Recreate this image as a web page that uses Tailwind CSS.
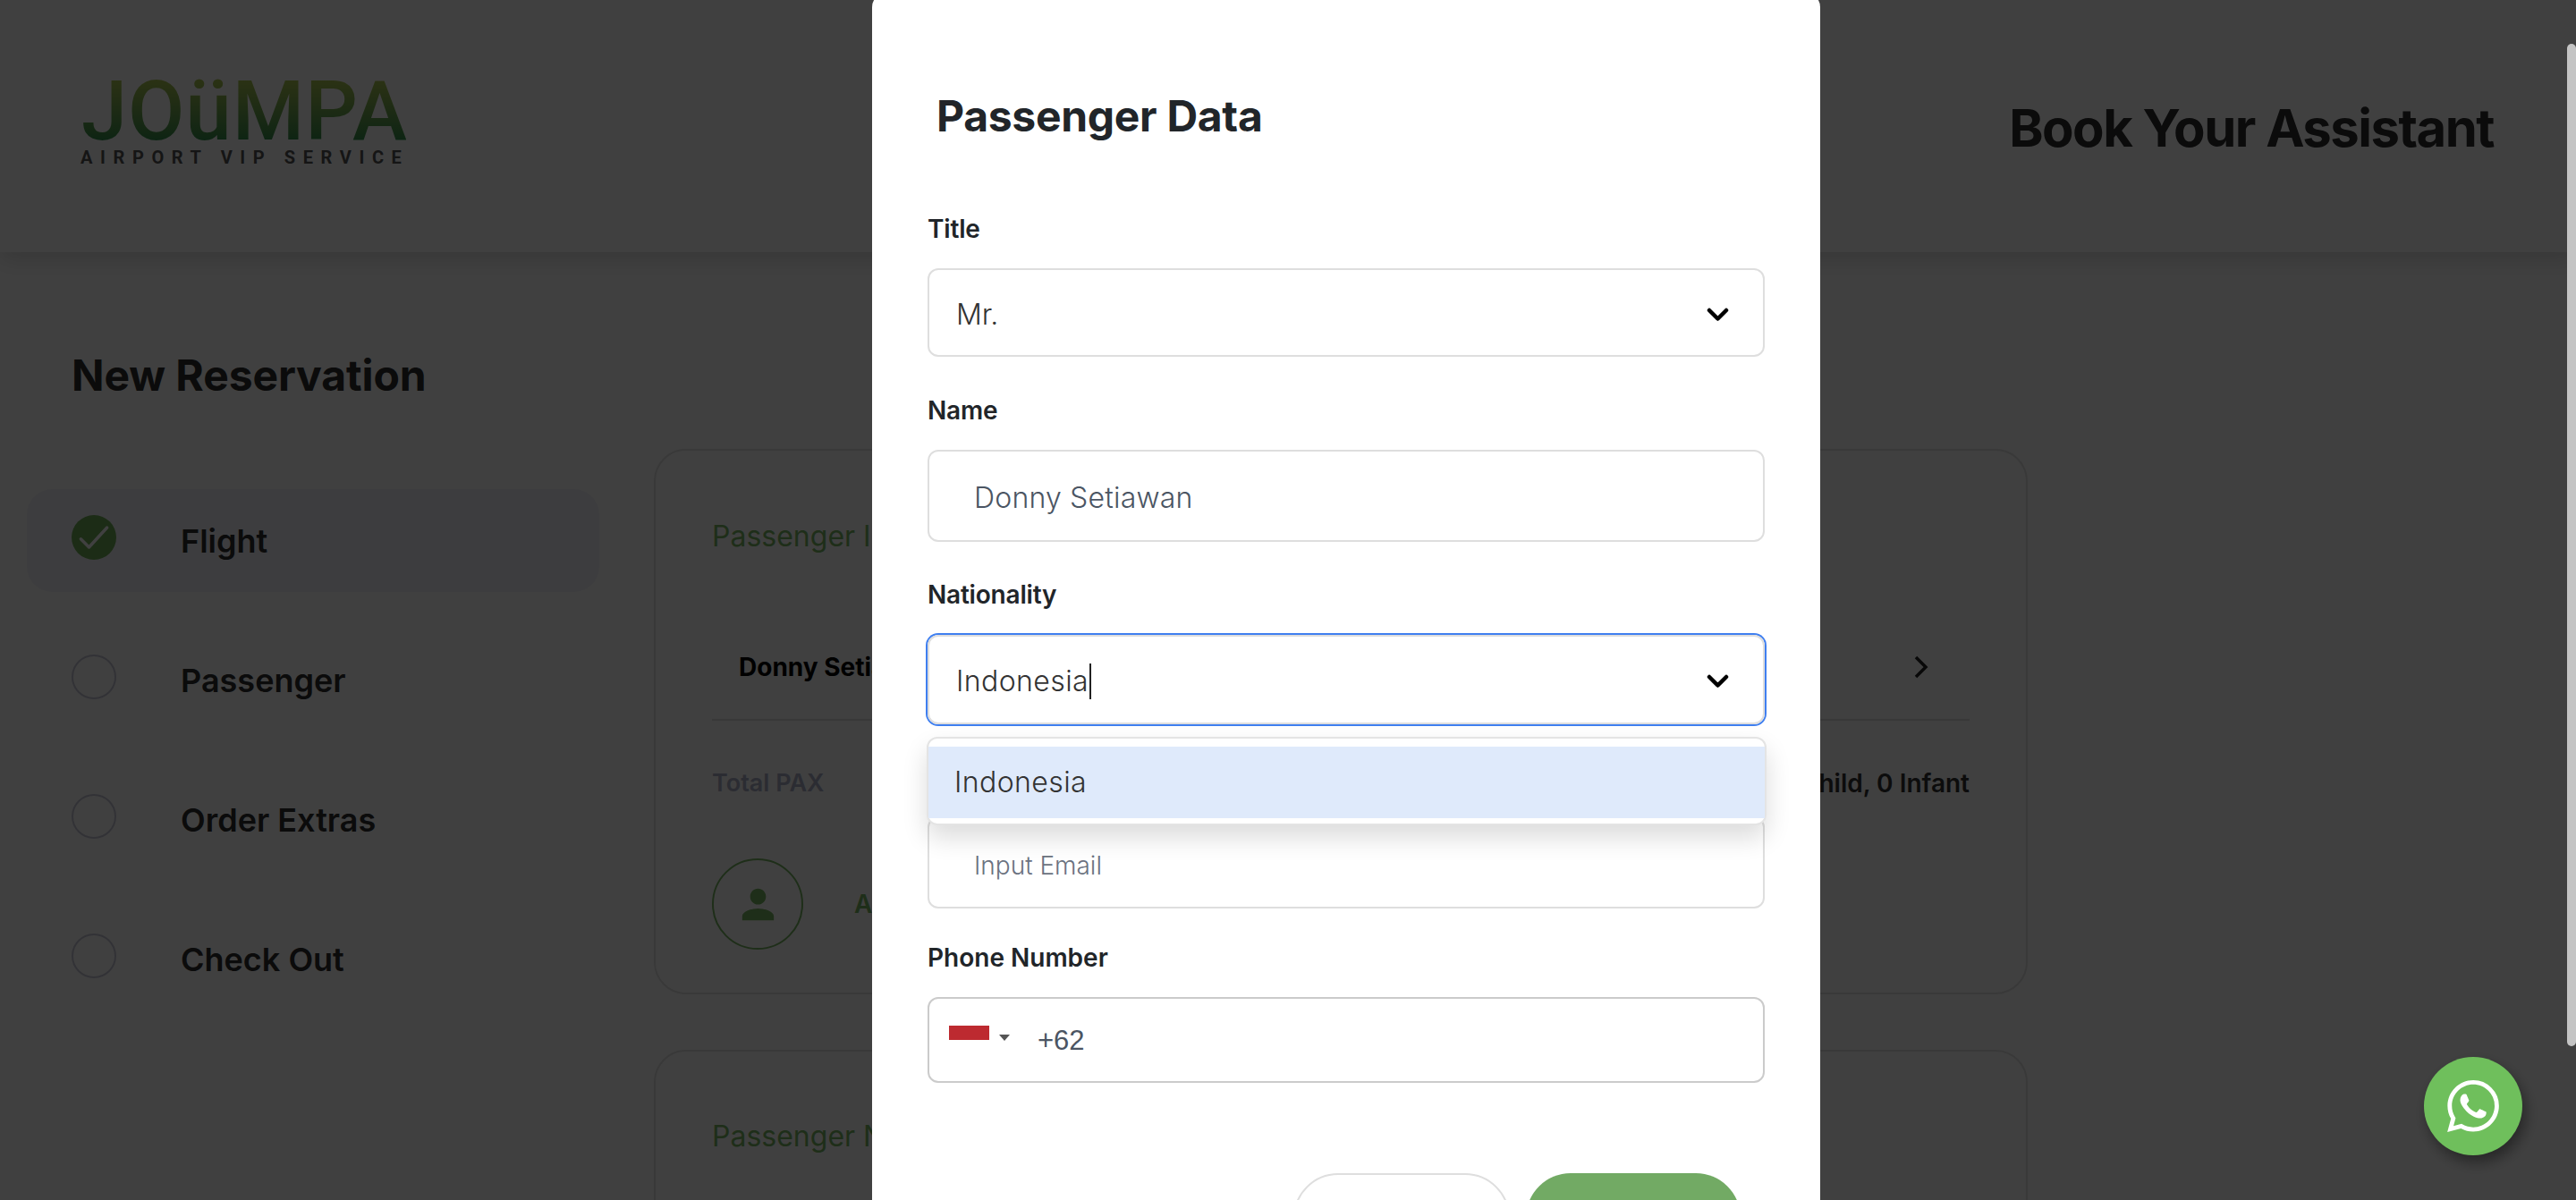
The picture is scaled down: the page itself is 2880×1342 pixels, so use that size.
<!DOCTYPE html>
<html lang="en">
<head>
  <meta charset="UTF-8" />
  <meta name="viewport" content="width=device-width, initial-scale=1.0"/>
  <title>New Reservation</title>
  <script src="https://cdn.jsdelivr.net/npm/@tailwindcss/browser@4"></script>
</head>
<body class="h-[1342px] overflow-hidden bg-white font-['Inter',sans-serif] text-[#2c2c2e]">

  <!-- Page behind the modal -->
  <header class="h-[282px] flex justify-between pl-[90px] pr-[92px] shadow-[0_8px_24px_rgba(0,0,0,0.15)]">
    <div class="w-[364px] mt-[86px]">
      <div class="pl-[1px] h-[78px] font-['Roboto',sans-serif] font-medium text-[92px] leading-[78px] tracking-[1px] bg-linear-to-b from-[#b0c850] to-[#1f8a4c] bg-clip-text text-transparent">JOüMPA</div>
      <div class="mt-[2px] font-['Roboto',sans-serif] font-bold text-[20px] leading-[20px] tracking-[8.6px] whitespace-nowrap text-[#555]">AIRPORT VIP SERVICE</div>
    </div>
    <div class="mt-[108px] text-[58px] leading-[70px] font-bold tracking-[-1.5px]">Book Your Assistant</div>
  </header>

  <main class="px-[30px]">
    <h1 class="mt-[108px] ml-[50px] text-[48px] leading-[60px] font-bold tracking-[-0.1px]">New Reservation</h1>

    <div class="mt-[52px] flex gap-[61px]">
      <nav class="w-[640px] pt-[45px] flex flex-col gap-[41px] text-[36px] font-semibold">
        <div class="h-[115px] pl-[50px] pr-[20px] flex items-center gap-[72px] rounded-[28px] bg-[#f4f4fa]">
          <span class="w-[50px] h-[50px] -mt-[7px] rounded-full bg-[#6fae58] flex items-center justify-center">
            <svg class="w-[44px] h-[44px]" viewBox="0 0 24 24" fill="none" stroke="#fff" stroke-width="1.9" stroke-linecap="round" stroke-linejoin="round"><path d="M4 13l5 5L20 6"/></svg>
          </span>
          <span>Flight</span>
        </div>
        <div class="h-[115px] pl-[50px] flex items-center gap-[72px]">
          <span class="w-[50px] h-[50px] -mt-[7px] rounded-full border-2 border-[#c8c8d8]"></span>
          <span>Passenger</span>
        </div>
        <div class="h-[115px] pl-[50px] flex items-center gap-[72px]">
          <span class="w-[50px] h-[50px] -mt-[7px] rounded-full border-2 border-[#c8c8d8]"></span>
          <span>Order Extras</span>
        </div>
        <div class="h-[115px] pl-[50px] flex items-center gap-[72px]">
          <span class="w-[50px] h-[50px] -mt-[7px] rounded-full border-2 border-[#c8c8d8]"></span>
          <span>Check Out</span>
        </div>
      </nav>

      <section class="w-[1536px] flex flex-col gap-[62px]">
        <div class="h-[610px] rounded-[36px] border-2 border-[#e2e2e2] px-[63px] pt-[76px]">
          <h2 class="text-[32px] leading-[40px] text-[#7ab865]">Passenger Information</h2>
          <div class="mt-[108px] pl-[30px] pr-[46px] h-[36px] flex items-center justify-between">
            <span class="text-[28px] font-bold text-black">Donny Setiawan</span>
            <svg class="w-[16px] h-[28px]" viewBox="0 0 16 28" fill="none" stroke="#222" stroke-width="3.5"><path d="M2 3l11 11L2 25"/></svg>
          </div>
          <div class="mt-[40px] h-[2px] bg-[#e0e0e0]"></div>
          <div class="mt-[52px] flex justify-between text-[28px] leading-[36px] font-semibold">
            <span class="text-[27px] text-[#acb0c8]">Total PAX</span>
            <span class="text-[#333]">1 Adult, 0 Child, 0 Infant</span>
          </div>
          <div class="mt-[66px] flex items-center gap-[57px]">
            <span class="w-[102px] h-[102px] rounded-full border-2 border-[#7ab865] flex items-center justify-center">
              <svg class="w-[53px] h-[53px] text-[#7ab865]" viewBox="0 0 24 24" fill="currentColor"><path d="M12 12c2.21 0 4-1.79 4-4s-1.79-4-4-4-4 1.79-4 4 1.79 4 4 4zm0 2c-2.67 0-8 1.34-8 4v2h16v-2c0-2.66-5.33-4-8-4z"/></svg>
            </span>
            <span class="text-[28px] font-semibold text-[#7ab865]">Add Passenger</span>
          </div>
        </div>
        <div class="h-[400px] rounded-[36px] border-2 border-[#e2e2e2] px-[63px] pt-[75px]">
          <h2 class="text-[32px] leading-[40px] text-[#7ab865]">Passenger Name</h2>
        </div>
      </section>
    </div>
  </main>

  <!-- Dim overlay and modal -->
  <div class="fixed inset-0 bg-black/75 overflow-hidden">
    <div class="w-[1060px] h-[1500px] -mt-[8px] ml-[975px] rounded-[16px] bg-white px-[62px] pt-[108px]">
      <h2 class="ml-[10px] text-[48px] leading-[60px] font-bold tracking-[-0.3px] text-[#212529]">Passenger Data</h2>

      <label class="block mt-[78px] text-[28px] leading-[36px] font-semibold tracking-[-0.2px] text-[#212529]">Title</label>
      <div class="mt-[26px] h-[99px] rounded-[12px] border-2 border-[#dedede] pt-[4px] pl-[30px] pr-[38px] flex items-center justify-between text-[32px] font-light text-[#333]">
        <span>Mr.</span>
        <svg class="w-[25px] h-[16px]" viewBox="0 0 25 16" fill="none" stroke="#000" stroke-width="4.5" stroke-linecap="round" stroke-linejoin="round"><path d="M3 3l9.5 9.5L22 3"/></svg>
      </div>

      <label class="block mt-[42px] text-[28px] leading-[36px] font-semibold tracking-[-0.2px] text-[#212529]">Name</label>
      <div class="mt-[26px] h-[103px] rounded-[12px] border-2 border-[#dedede] pt-[4px] pl-[50px] flex items-center text-[32px] font-light tracking-[0.2px] text-[#4b5563]">Donny Setiawan</div>

      <div class="relative">
        <label class="block mt-[41px] text-[28px] leading-[36px] font-semibold tracking-[-0.2px] text-[#212529]">Nationality</label>
        <div class="mt-[27px] h-[100px] rounded-[12px] border-2 border-[#dedede] ring-2 ring-[#3f7ff0] pt-[4px] pl-[30px] pr-[38px] flex items-center justify-between text-[32px] font-light text-[#333]">
          <span class="flex items-center tracking-[0.4px]">Indonesia<span class="ml-[1px] w-[2px] h-[40px] bg-[#222]"></span></span>
          <svg class="w-[25px] h-[16px]" viewBox="0 0 25 16" fill="none" stroke="#000" stroke-width="4.5" stroke-linecap="round" stroke-linejoin="round"><path d="M3 3l9.5 9.5L22 3"/></svg>
        </div>
        <!-- Open dropdown list -->
        <div class="absolute z-10 -left-[1px] -right-[2px] top-full mt-[14px] h-[99px] py-[9px] rounded-[12px] bg-white border-2 border-[#e4e4e4] shadow-[0_14px_28px_rgba(0,0,0,0.14)]">
          <div class="h-[80px] bg-[#dfeafb] pl-[29px] flex items-center text-[32px] font-light tracking-[0.4px] text-[#333]">Indonesia</div>
        </div>
      </div>

      <label class="block mt-[41px] text-[28px] leading-[36px] font-semibold tracking-[-0.2px] text-[#212529]">Email</label>
      <div class="mt-[26px] h-[103px] rounded-[12px] border-2 border-[#dedede] pt-[6px] pl-[50px] flex items-center text-[28px] font-light text-[#6b7280]">Input Email</div>

      <label class="block mt-[37px] text-[28px] leading-[36px] font-semibold text-[#212529]">Phone Number</label>
      <div class="mt-[26px] h-[96px] rounded-[12px] border-2 border-[#cbcbcb] pl-[22px] flex items-center">
        <span class="w-[45px] h-[16px] -mt-[16px] bg-[#bd2a30]"></span>
        <span class="ml-[11px] -mt-[5px] w-0 h-0 border-x-[6px] border-x-transparent border-t-[7px] border-t-[#555]"></span>
        <span class="ml-[31px] pt-[2px] font-['Liberation_Sans',sans-serif] text-[31px] text-[#4b5563]">+62</span>
      </div>

      <div class="mt-[101px] pr-[27px] flex justify-end gap-[18px]">
        <button class="w-[242px] h-[100px] rounded-[50px] bg-white border-2 border-[#dedede] text-[30px] font-semibold text-[#333]">Cancel</button>
        <button class="w-[240px] h-[100px] rounded-[50px] bg-[#72aa64] text-[30px] font-semibold text-white">Save</button>
      </div>
    </div>
  </div>

  <!-- Floating bits above the overlay -->
  <div class="fixed right-0 top-[49px] w-[10px] h-[1121px] rounded-full bg-[#c4c4c4]"></div>
  <a class="fixed left-[2710px] top-[1182px] w-[110px] h-[110px] rounded-full bg-[#6fbf5c] shadow-[4px_8px_16px_rgba(0,0,0,0.4)] flex items-center justify-center">
    <svg class="w-[58px] h-[58px]" viewBox="0 0 24 24" fill="#fff"><path d="M17.472 14.382c-.297-.149-1.758-.867-2.03-.967-.273-.099-.471-.148-.67.15-.197.297-.767.966-.94 1.164-.173.199-.347.223-.644.075-.297-.15-1.255-.463-2.39-1.475-.883-.788-1.48-1.761-1.653-2.059-.173-.297-.018-.458.13-.606.134-.133.298-.347.446-.52.149-.174.198-.298.298-.497.099-.198.05-.371-.025-.52-.075-.149-.669-1.612-.916-2.207-.242-.579-.487-.5-.669-.51-.173-.008-.371-.01-.57-.01-.198 0-.52.074-.792.372-.272.297-1.04 1.016-1.04 2.479 0 1.462 1.065 2.875 1.213 3.074.149.198 2.096 3.2 5.077 4.487.709.306 1.262.489 1.694.625.712.227 1.36.195 1.871.118.571-.085 1.758-.719 2.006-1.413.248-.694.248-1.289.173-1.413-.074-.124-.272-.198-.57-.347m-5.421 7.403h-.004a9.87 9.87 0 01-5.031-1.378l-.361-.214-3.741.982.998-3.648-.235-.374a9.86 9.86 0 01-1.51-5.26c.001-5.45 4.436-9.884 9.888-9.884 2.64 0 5.122 1.03 6.988 2.898a9.825 9.825 0 012.893 6.994c-.003 5.45-4.437 9.884-9.885 9.884m8.413-18.297A11.815 11.815 0 0012.05 0C5.495 0 .16 5.335.157 11.892c0 2.096.547 4.142 1.588 5.945L.057 24l6.305-1.654a11.882 11.882 0 005.683 1.448h.005c6.554 0 11.89-5.335 11.893-11.893a11.821 11.821 0 00-3.48-8.413z"/></svg>
  </a>

</body>
</html>
